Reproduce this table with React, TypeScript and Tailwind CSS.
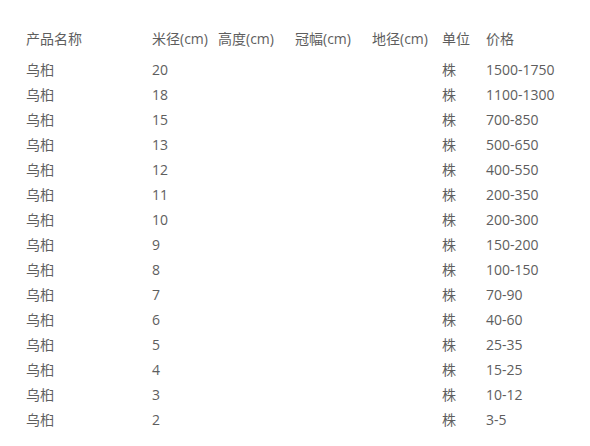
const rows: [string, string][] = [
  ["20", "1500-1750"],
  ["18", "1100-1300"],
  ["15", "700-850"],
  ["13", "500-650"],
  ["12", "400-550"],
  ["11", "200-350"],
  ["10", "200-300"],
  ["9", "150-200"],
  ["8", "100-150"],
  ["7", "70-90"],
  ["6", "40-60"],
  ["5", "25-35"],
  ["4", "15-25"],
  ["3", "10-12"],
  ["2", "3-5"],
];

const cols = "grid grid-cols-[126px_66px_77px_77px_70px_44px_1fr]";

export default function App() {
  return (
    <div
      className="w-[590px] h-[446px] bg-white pl-[26px] pt-[26px] text-[14px] text-[#5e5e5e]"
      style={{ fontFamily: '"Open Sans", "Noto Sans CJK SC", sans-serif' }}
    >
      <div className={`${cols} h-[25px] items-center`}>
        <div>产品名称</div>
        <div>米径(cm)</div>
        <div>高度(cm)</div>
        <div>冠幅(cm)</div>
        <div>地径(cm)</div>
        <div>单位</div>
        <div>价格</div>
      </div>
      <div className="mt-[6px]">
        {rows.map(([d, p], i) => (
          <div key={i} className={`${cols} h-[25px] items-center`}>
            <div>乌桕</div>
            <div>{d}</div>
            <div></div>
            <div></div>
            <div></div>
            <div>株</div>
            <div>{p}</div>
          </div>
        ))}
      </div>
    </div>
  );
}
